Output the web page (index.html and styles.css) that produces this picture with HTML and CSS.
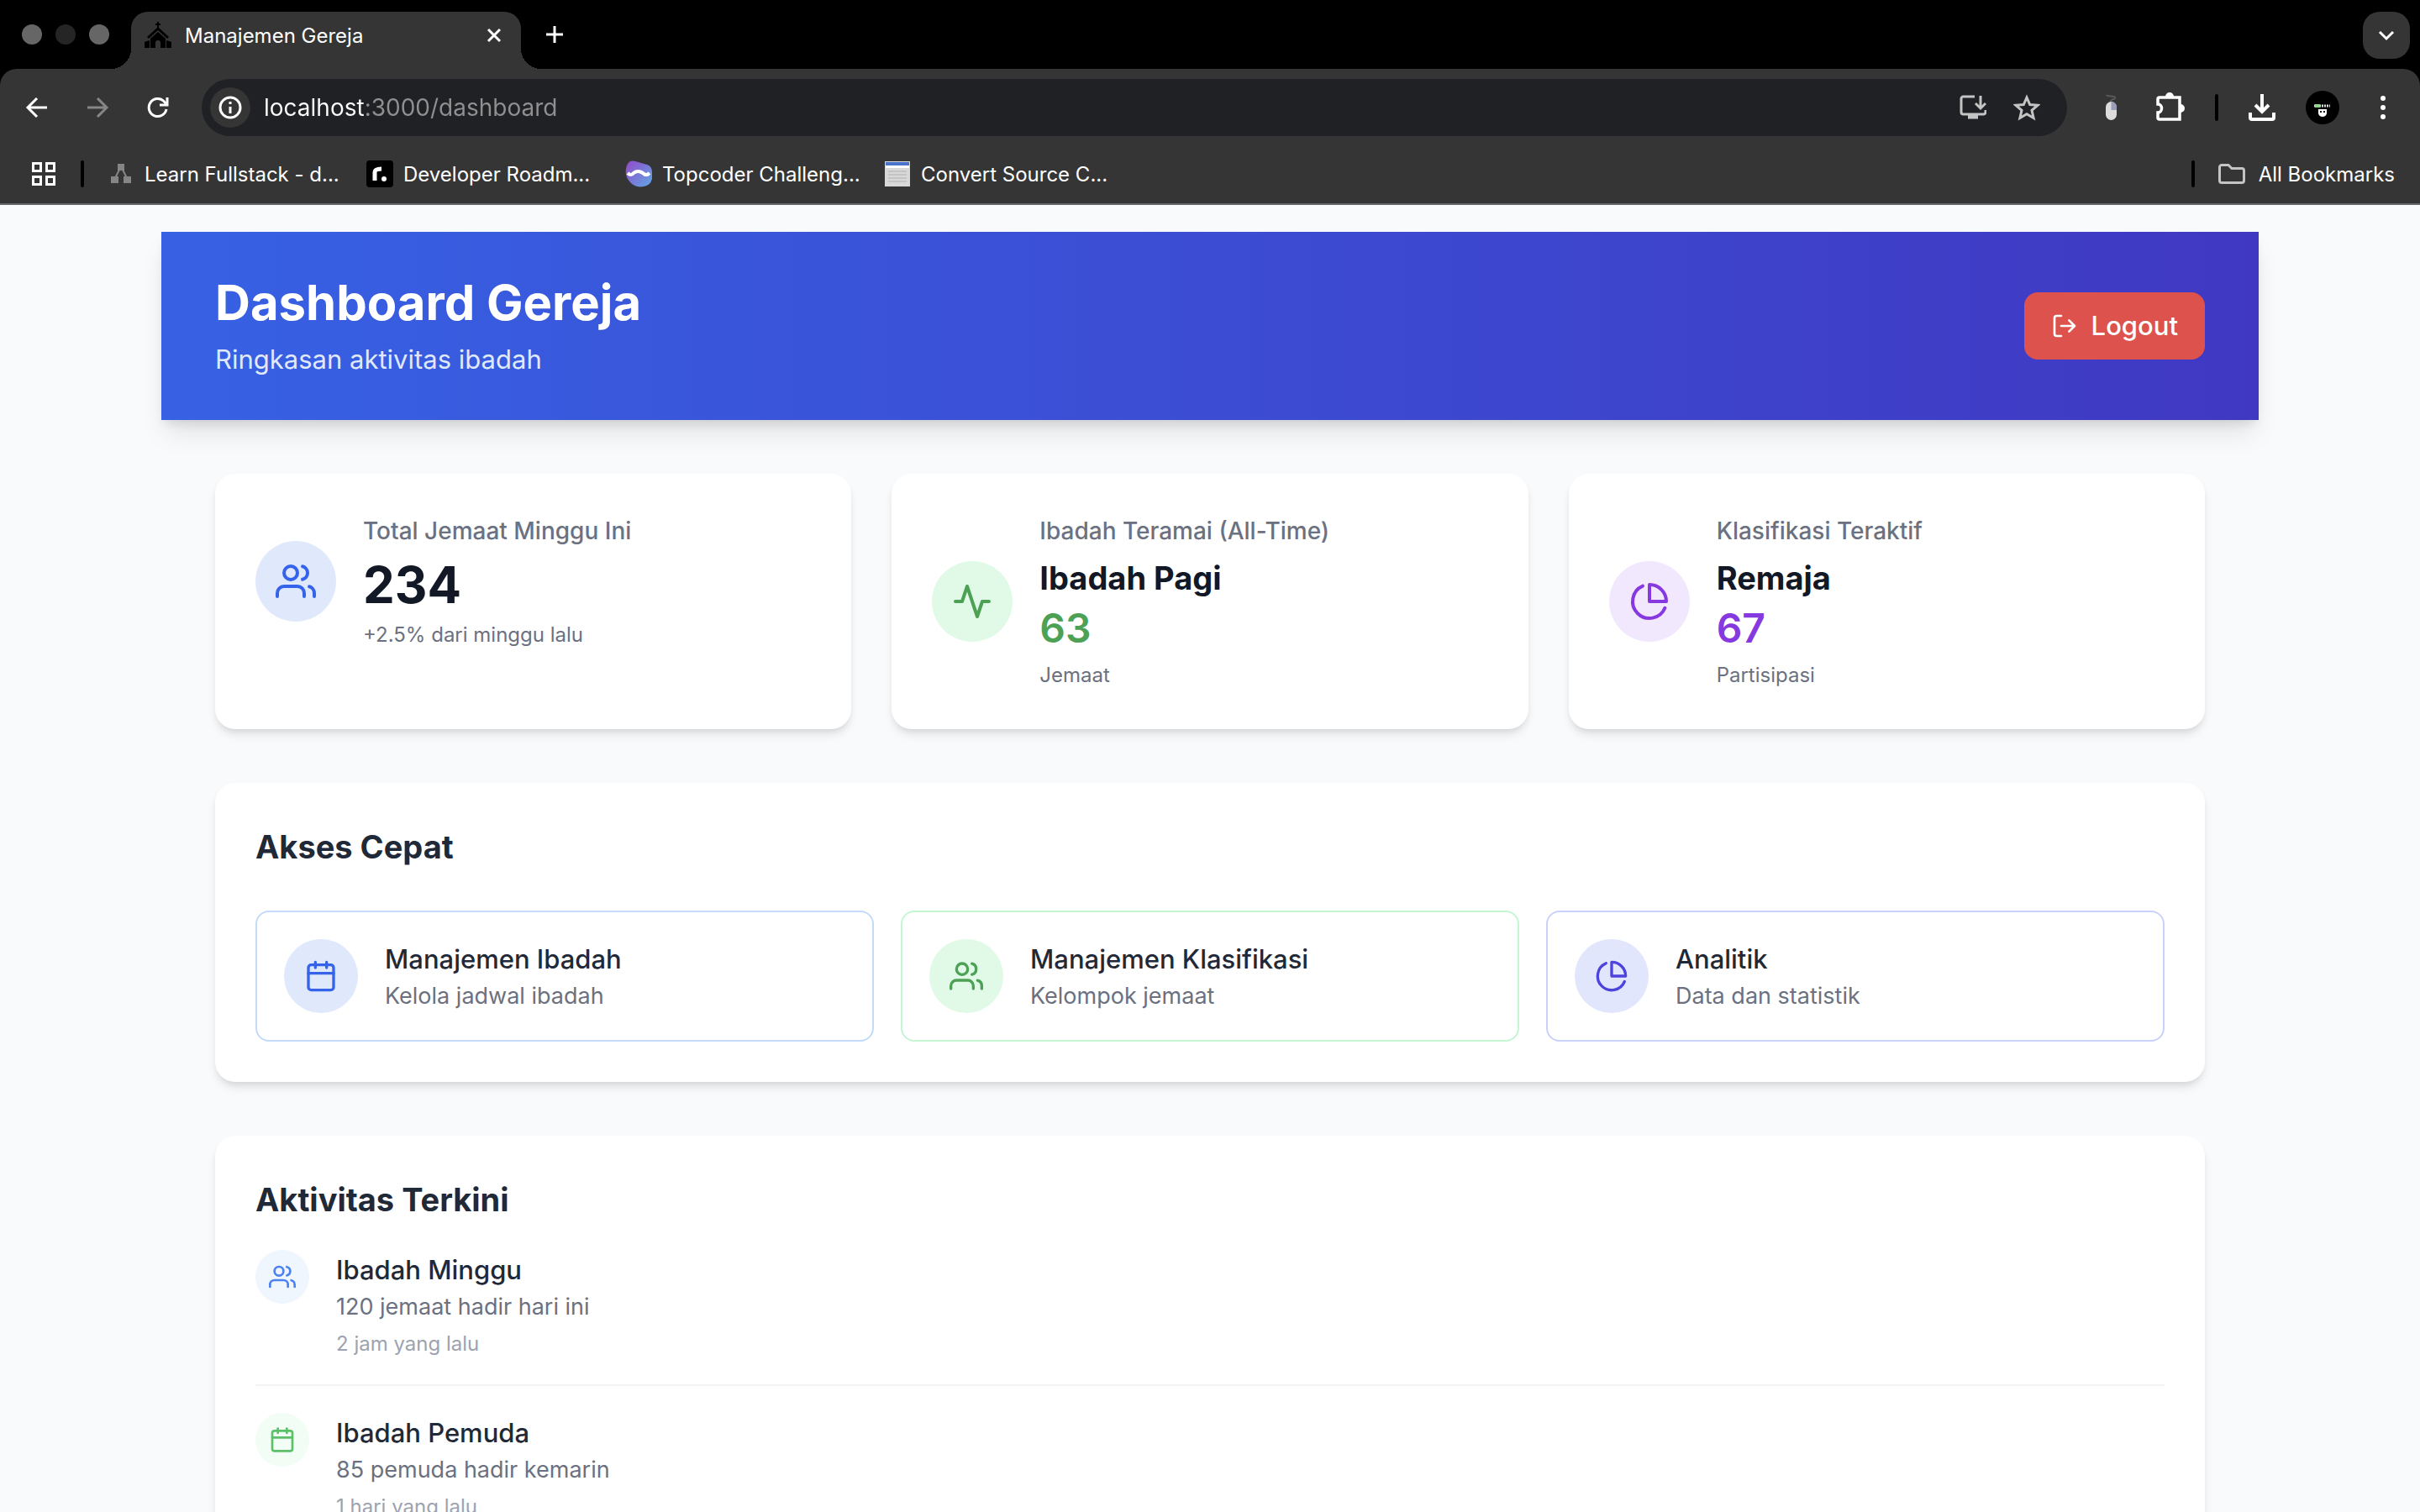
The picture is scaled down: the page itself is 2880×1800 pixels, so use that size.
FILE: index.html
```html
<!DOCTYPE html>
<html lang="id">
<head>
<meta charset="utf-8">
<title>Manajemen Gereja</title>
<link rel="stylesheet" href="styles.css">
</head>
<body>
<svg class="sprite" aria-hidden="true">
  <symbol id="users" viewBox="0 0 24 24"><path d="M17 21v-2a4 4 0 0 0-4-4H5a4 4 0 0 0-4 4v2"/><circle cx="9" cy="7" r="4"/><path d="M23 21v-2a4 4 0 0 0-3-3.87M16 3.13a4 4 0 0 1 0 7.75"/></symbol>
  <symbol id="activity" viewBox="0 0 24 24"><path d="M22 12h-4l-3 9L9 3l-3 9H2"/></symbol>
  <symbol id="pie" viewBox="0 0 24 24"><path d="M21.21 15.89A10 10 0 1 1 8 2.83"/><path d="M22 12A10 10 0 0 0 12 2v10z"/></symbol>
  <symbol id="calendar" viewBox="0 0 24 24"><rect x="3" y="4" width="18" height="18" rx="2"/><path d="M16 2v4M8 2v4M3 10h18"/></symbol>
  <symbol id="logout" viewBox="0 0 24 24"><path d="M9 21H5a2 2 0 0 1-2-2V5a2 2 0 0 1 2-2h4M16 17l5-5-5-5M21 12H9"/></symbol>
</svg>

<header class="browser">
  <div class="tab-strip">
    <div class="lights"><i class="light"></i><i class="light light-dim"></i><i class="light"></i></div>
    <div class="tab">
      <svg class="icon-32" viewBox="0 0 32 32" fill="#000"><path d="M15 0h2v2h2v2h-2v3l12 11-2 2L16 10 5 20l-2-2L15 7V4h-2V2h2z"/><path d="M16 12l9 8v11h-6v-6a3 3 0 0 0-6 0v6H7V20zM0 24l6-2v9H0zM32 24l-6-2v9h6z"/></svg>
      <span class="tab-title">Manajemen Gereja</span>
      <button class="bare" aria-label="Close tab"><svg class="icon-32" viewBox="0 0 32 32" fill="none" stroke="#fff" stroke-width="3"><path d="M9 9l14 14M23 9L9 23"/></svg></button>
    </div>
    <button class="bare new-tab" aria-label="New tab"><svg class="icon-32" viewBox="0 0 32 32" fill="none" stroke="#fff" stroke-width="3"><path d="M16 6v20M6 16h20"/></svg></button>
    <button class="bare tab-search" aria-label="Search tabs"><svg class="icon-32" viewBox="0 0 32 32" fill="none" stroke="#fff" stroke-width="3"><path d="M8 12l8 8 8-8"/></svg></button>
  </div>

  <div class="toolbar">
    <nav class="nav-buttons">
      <button class="bare" aria-label="Back"><svg class="icon-32" viewBox="0 0 32 32" fill="none" stroke="#fff" stroke-width="3"><path d="M28 16H6M16 5L5 16l11 11"/></svg></button>
      <button class="bare" aria-label="Forward"><svg class="icon-32" viewBox="0 0 32 32" fill="none" stroke="#868686" stroke-width="3"><path d="M4 16h22M16 5l11 11-11 11"/></svg></button>
      <button class="bare" aria-label="Reload"><svg class="icon-32" viewBox="0 0 32 32" fill="none" stroke="#fff" stroke-width="3"><path d="M26 18a10.500 10.500 0 1 1-3-9.500l3 3.500"/><path d="M27 4v9h-9"/></svg></button>
    </nav>
    <div class="omnibox">
      <button class="bare site-info" aria-label="Site information"><svg class="icon-32" viewBox="0 0 32 32" fill="none" stroke="#fff" stroke-width="3"><circle cx="16" cy="16" r="12"/><path d="M16 15v8M16 9v3"/></svg></button>
      <input class="url" type="text" aria-label="Address" value="localhost:3000/dashboard">
      <button class="bare" aria-label="Install app"><svg class="icon-32" viewBox="0 0 32 32" fill="none" stroke="#c4c4c4" stroke-width="3"><path d="M18 3H4.500a2.500 2.500 0 0 0-2.500 2.500v16A2.500 2.500 0 0 0 4.500 24h24a2.500 2.500 0 0 0 2.500-2.500V19M25 2v14M19 11l6 6 6-6"/><path d="M10 27h12" stroke-width="5"/></svg></button>
      <button class="bare" aria-label="Bookmark this tab"><svg class="icon-32" viewBox="0 0 32 32" fill="none" stroke="#c4c4c4" stroke-width="3"><path d="M16 4l3.700 8.500 9.300.8-7 6.100 2.100 9.100L16 23.700l-8.100 4.800L10 19.400l-7-6.100 9.300-.8z"/></svg></button>
    </div>
    <div class="extensions">
      <button class="bare" aria-label="Mouse extension"><svg class="icon-32" viewBox="0 0 32 32"><path d="M16 9c0-4 6-2 5-5s-9 0-10-3" fill="none" stroke="#5a5a5a" stroke-width="2"/><rect x="10" y="9" width="13" height="22" rx="6.500" fill="#dcdcdc"/><path d="M16.500 9a6.500 6.500 0 0 1 6.500 6.500V19h-6.500z" fill="#9a9db8"/></svg></button>
      <button class="bare" aria-label="Extensions"><svg class="icon-36" viewBox="0 0 36 36" fill="none" stroke="#fff" stroke-width="3.500"><path d="M6 6h24v26H6a2 2 0 0 1-2-2v-6c6 0 6-10 0-10V8a2 2 0 0 1 2-2z"/><path d="M13 5a5 5 0 0 1 10 0zM31 14a5 5 0 0 1 0 10z" fill="#fff" stroke="none"/></svg></button>
      <i class="divider"></i>
      <button class="bare" aria-label="Downloads"><svg class="icon-32" viewBox="0 0 32 32" fill="none" stroke="#fff" stroke-width="4"><path d="M16 0v20M8 13l8 8 8-8M2 22v6a2 2 0 0 0 2 2h24a2 2 0 0 0 2-2v-6"/></svg></button>
      <button class="bare" aria-label="Profile"><svg class="icon-40" viewBox="0 0 40 40"><circle cx="20" cy="20" r="20" fill="#000"/><path d="M10 18h19" stroke="#ddd" stroke-width="3" stroke-dasharray="2 1"/><path d="M11 18h6" stroke="#8ed68a" stroke-width="4"/><path d="M15 22h10v5q-1 4-5 4t-5-4z" fill="#fff"/><path d="M17 25h2M21 25h2" stroke="#000" stroke-width="2"/></svg></button>
      <button class="bare" aria-label="Menu"><svg class="icon-32" viewBox="0 0 32 32" fill="#fff"><circle cx="16" cy="5" r="3"/><circle cx="16" cy="16" r="3"/><circle cx="16" cy="27" r="3"/></svg></button>
    </div>
  </div>

  <nav class="bookmarks">
    <button class="bare" aria-label="Apps"><svg class="icon-32" viewBox="0 0 32 32" fill="none" stroke="#fff" stroke-width="3"><path d="M3.500 3.500h9v9h-9zM19.500 3.500h9v9h-9zM3.500 19.500h9v9h-9zM19.500 19.500h9v9h-9z"/></svg></button>
    <i class="divider"></i>
    <a class="bookmark" href="#"><svg class="icon-32" viewBox="0 0 32 32" fill="#858585"><path d="M12 4h8v8h-8zM4 19h9v8H4zM19 19h9v8h-9z"/><path d="M14 11l-5 10M18 11l5 10" stroke="#858585" stroke-width="2"/></svg>Learn Fullstack - d...</a>
    <a class="bookmark" href="#"><svg class="icon-32" viewBox="0 0 32 32"><rect width="32" height="32" rx="4" fill="#000"/><path d="M10 24V14q0-4 8-4" fill="none" stroke="#fff" stroke-width="5"/><circle cx="21" cy="22" r="3" fill="#fff"/></svg>Developer Roadm...</a>
    <a class="bookmark" href="#"><svg class="icon-32" viewBox="0 0 32 32"><defs><linearGradient id="tc" x1="0" y1="0" x2="1" y2="1"><stop offset="0" stop-color="#9448c8"/><stop offset="1" stop-color="#5fa8e6"/></linearGradient></defs><path d="M2 6Q5-1 12 1l14 4q6 2 6 9v8q-2 8-10 9-10 2-16-5Q-2 18 2 6z" fill="url(#tc)"/><path d="M3 15q4 4 7 0 5-4 11 0 4 4 8 0" fill="none" stroke="#fff" stroke-width="4"/></svg>Topcoder Challeng...</a>
    <a class="bookmark" href="#"><svg class="icon-32" viewBox="0 0 32 32"><path d="M1 1h30v30H1z" fill="#d8d8d8"/><path d="M2 2h28v4H2z" fill="#4a73cb"/><path d="M2 6h28v3H2z" fill="#fff"/><path d="M5 13h22M5 17h22M5 21h22M5 25h22" stroke="#c4c4c4" stroke-width="2"/></svg>Convert Source C...</a>
    <i class="divider divider-right"></i>
    <a class="all-bookmarks" href="#"><svg class="icon-32" viewBox="0 0 32 32" fill="none" stroke="#c4c4c4" stroke-width="3"><path d="M4 5.500h8l4 4h12a2.500 2.500 0 0 1 2.500 2.500v12a2.500 2.500 0 0 1-2.500 2.500H4A2.500 2.500 0 0 1 1.500 24V8A2.500 2.500 0 0 1 4 5.500z"/></svg>All Bookmarks</a>
  </nav>
</header>

<main class="page">
  <div class="container">
    <header class="hero">
      <div>
        <h1 class="hero-title">Dashboard Gereja</h1>
        <p class="hero-sub">Ringkasan aktivitas ibadah</p>
      </div>
      <button class="logout"><svg class="line icon-32"><use href="#logout"/></svg>Logout</button>
    </header>

    <div class="content">
      <section class="stats">
        <article class="card">
          <div class="stat">
            <span class="badge badge-lg blue"><svg class="line"><use href="#users"/></svg></span>
            <div>
              <p class="stat-label">Total Jemaat Minggu Ini</p>
              <p class="stat-value">234</p>
              <p class="stat-note">+2.5% dari minggu lalu</p>
            </div>
          </div>
        </article>
        <article class="card">
          <div class="stat">
            <span class="badge badge-lg green"><svg class="line"><use href="#activity"/></svg></span>
            <div>
              <p class="stat-label">Ibadah Teramai (All-Time)</p>
              <p class="stat-name">Ibadah Pagi</p>
              <p class="stat-count text-green">63</p>
              <p class="stat-note">Jemaat</p>
            </div>
          </div>
        </article>
        <article class="card">
          <div class="stat">
            <span class="badge badge-lg purple"><svg class="line"><use href="#pie"/></svg></span>
            <div>
              <p class="stat-label">Klasifikasi Teraktif</p>
              <p class="stat-name">Remaja</p>
              <p class="stat-count text-purple">67</p>
              <p class="stat-note">Partisipasi</p>
            </div>
          </div>
        </article>
      </section>

      <section class="card">
        <h2 class="section-title">Akses Cepat</h2>
        <div class="quick">
          <a class="quick-link border-blue" href="#">
            <span class="badge badge-md blue"><svg class="line"><use href="#calendar"/></svg></span>
            <span class="rows"><span class="item-title">Manajemen Ibadah</span><span class="item-text">Kelola jadwal ibadah</span></span>
          </a>
          <a class="quick-link border-green" href="#">
            <span class="badge badge-md green"><svg class="line"><use href="#users"/></svg></span>
            <span class="rows"><span class="item-title">Manajemen Klasifikasi</span><span class="item-text">Kelompok jemaat</span></span>
          </a>
          <a class="quick-link border-indigo" href="#">
            <span class="badge badge-md indigo"><svg class="line"><use href="#pie"/></svg></span>
            <span class="rows"><span class="item-title">Analitik</span><span class="item-text">Data dan statistik</span></span>
          </a>
        </div>
      </section>

      <section class="card">
        <h2 class="section-title">Aktivitas Terkini</h2>
        <ul class="feed">
          <li class="feed-item">
            <span class="badge badge-sm pale-blue"><svg class="line"><use href="#users"/></svg></span>
            <div class="rows"><span class="item-title">Ibadah Minggu</span><span class="item-text">120 jemaat hadir hari ini</span><time class="item-time">2 jam yang lalu</time></div>
          </li>
          <li class="feed-item">
            <span class="badge badge-sm pale-green"><svg class="line"><use href="#calendar"/></svg></span>
            <div class="rows"><span class="item-title">Ibadah Pemuda</span><span class="item-text">85 pemuda hadir kemarin</span><time class="item-time">1 hari yang lalu</time></div>
          </li>
        </ul>
      </section>
    </div>
  </div>
</main>
</body>
</html>
```
FILE: styles.css
```css
*, *::before, *::after { box-sizing: border-box; }
body {
  margin: 0;
  height: 100vh;
  display: flex;
  flex-direction: column;
  overflow: hidden;
  background: #f9fafc;
  color: #1f2937;
  font-family: Inter, "Liberation Sans", sans-serif;
}
h1, h2, p, ul { margin: 0; padding: 0; }
ul { list-style: none; }
a { color: inherit; text-decoration: none; }
button { font: inherit; cursor: pointer; }
svg { display: block; flex: none; }
.sprite { position: absolute; width: 0; height: 0; }
.bare { display: flex; align-items: center; justify-content: center; padding: 0; border: 0; background: none; flex: none; }
.icon-32 { width: 32px; height: 32px; }
.icon-36 { width: 36px; height: 36px; }
.icon-40 { width: 40px; height: 40px; }
.line { fill: none; stroke: currentColor; stroke-width: 2; stroke-linecap: round; stroke-linejoin: round; }

/* Browser chrome */
.browser { flex: none; background: #000; color: #fff; font-size: 24px; }
.tab-strip { display: flex; align-items: center; height: 82px; padding: 14px 12px 0 26px; }
.lights { display: flex; gap: 16px; margin-bottom: 14px; }
.light { width: 24px; height: 24px; border-radius: 50%; background: #666; }
.light-dim { background: #252525; }
.tab {
  position: relative;
  display: flex;
  align-items: center;
  gap: 16px;
  width: 464px;
  height: 68px;
  margin-left: 26px;
  padding: 0 16px 12px;
  border-radius: 20px 20px 0 0;
  background: #353535;
}
.tab::before, .tab::after { content: ""; position: absolute; bottom: 0; width: 24px; height: 24px; }
.tab::before { right: 100%; background: radial-gradient(circle at 0 0, #000 24px, #353535 24px); }
.tab::after { left: 100%; background: radial-gradient(circle at 100% 0, #000 24px, #353535 24px); }
.tab-title { flex: 1; }
.new-tab { margin: 0 auto 14px 24px; }
.tab-search { width: 56px; height: 56px; margin-bottom: 12px; border-radius: 20px; background: #353535; }
.toolbar { display: flex; align-items: center; gap: 36px; padding: 12px 28px 10px; border-radius: 20px 20px 0 0; background: #353535; }
.nav-buttons { display: flex; gap: 40px; }
.omnibox { flex: 1; display: flex; align-items: center; gap: 32px; height: 68px; padding: 0 32px 0 10px; border-radius: 34px; background: #202124; }
.site-info { width: 48px; height: 48px; border-radius: 50%; background: #353535; }
.url {
  flex: 1;
  min-width: 0;
  margin-left: -16px;
  padding: 0;
  border: 0;
  outline: 0;
  font: inherit;
  font-size: 28px;
  line-height: 40px;
  color: transparent;
  background: linear-gradient(to right, #fff 121px, #909091 121px) text;
}
.extensions { display: flex; align-items: center; gap: 36px; }
.divider { width: 4px; height: 32px; border-radius: 2px; background: #000; }
.bookmarks { display: flex; align-items: center; gap: 28px; height: 72px; padding: 0 30px 0 36px; border-bottom: 2px solid #656565; background: #353535; }
.bookmark, .all-bookmarks { display: flex; align-items: center; gap: 12px; white-space: nowrap; }
.bookmark { width: 280px; }
.all-bookmarks { gap: 16px; }
.divider-right { margin-left: auto; }

/* Dashboard */
.page { flex: 1; min-height: 0; overflow: hidden; padding: 32px; }
.container { max-width: 2496px; margin: 0 auto; }
.hero {
  display: flex;
  align-items: center;
  justify-content: space-between;
  padding: 48px 64px;
  color: #fff;
  background: linear-gradient(to right, #3761e3, #4038c3);
  box-shadow: 0 20px 30px -6px rgba(0, 0, 0, .1), 0 8px 12px -4px rgba(0, 0, 0, .1);
}
.hero-title { font-size: 58px; line-height: 72px; font-weight: 700; }
.hero-sub { margin-top: 8px; font-size: 31px; line-height: 48px; color: #dfe9fb; }
.logout { display: flex; align-items: center; gap: 16px; padding: 16px 32px; border: 0; border-radius: 16px; background: #dd524c; color: #fff; font-size: 31px; line-height: 48px; font-weight: 500; }
.content { display: flex; flex-direction: column; gap: 64px; padding: 64px; }
.stats { display: grid; grid-template-columns: repeat(3, 1fr); gap: 48px; }
.card { padding: 48px; border-radius: 24px; background: #fff; box-shadow: 0 8px 12px -2px rgba(0, 0, 0, .1), 0 4px 8px -4px rgba(0, 0, 0, .1); }
.stat { display: flex; align-items: center; gap: 32px; }
.stat-label { margin-bottom: 8px; font-size: 28px; line-height: 40px; font-weight: 500; color: #6b7180; }
.stat-value { font-size: 60px; line-height: 72px; font-weight: 700; color: #121826; }
.stat-name { font-size: 38px; line-height: 56px; font-weight: 700; color: #121826; }
.stat-count { font-size: 48px; line-height: 64px; font-weight: 600; }
.stat-note { margin-top: 8px; font-size: 24px; line-height: 32px; color: #6b7180; }
.text-green { color: #4ca154; }
.text-purple { color: #8639df; }

.badge { flex: none; display: block; border-radius: 50%; }
.badge svg { width: 100%; height: 100%; }
.badge-lg { width: 96px; height: 96px; padding: 24px; }
.badge-md { width: 88px; height: 88px; padding: 24px; }
.badge-sm { width: 64px; height: 64px; padding: 16px; }
.blue { background: #dfe9fb; color: #3563e9; }
.green { background: #e1fae8; color: #4ca154; }
.purple { background: #f1e8fd; color: #8639df; }
.indigo { background: #e1e6fd; color: #4d43dd; }
.pale-blue { background: #eff6fe; color: #4c82f0; }
.pale-green { background: #f2fdf5; color: #5bc168; }

.section-title { font-size: 38px; line-height: 56px; font-weight: 700; }
.quick { display: grid; grid-template-columns: repeat(3, 1fr); gap: 32px; margin-top: 48px; }
.quick-link { display: flex; align-items: center; gap: 32px; padding: 32px; border: 2px solid; border-radius: 16px; }
.border-blue { border-color: #c3dafb; }
.border-green { border-color: #c5f5d3; }
.border-indigo { border-color: #c8d2fb; }
.rows { display: flex; flex-direction: column; }
.item-title { font-size: 31px; line-height: 48px; font-weight: 500; }
.item-text { font-size: 27px; line-height: 40px; color: #6b7180; }
.item-time { margin-top: 8px; font-size: 24px; line-height: 32px; color: #9ca3af; }
.feed-item { display: flex; align-items: flex-start; gap: 32px; padding: 32px 0; }
.feed-item + .feed-item { border-top: 2px solid #f3f4f6; }
```
